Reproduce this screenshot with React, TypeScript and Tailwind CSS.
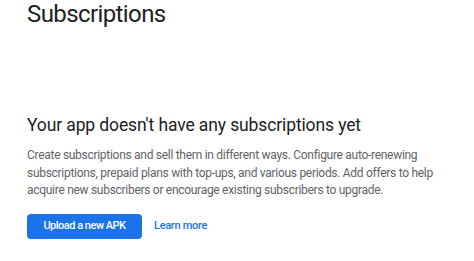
export default function App() {
  return (
    <main className="w-[474px] h-[261px] overflow-hidden bg-white px-[27px] font-['Roboto',sans-serif]">
      <h1 className="mt-[-2px] text-[24px] leading-[32px] tracking-[-0.6px] text-[#202124]">Subscriptions</h1>

      <div className="mt-[83px]">
        <h2 className="text-[17.5px] leading-[24px] tracking-[-0.12px] text-[#202124]">
          Your app doesn&apos;t have any subscriptions yet
        </h2>
        <p className="mt-[10px] whitespace-nowrap text-[12px] leading-[17.5px] tracking-[-0.29px] text-[#5f6368]">
          Create subscriptions and sell them in different ways. Configure auto-renewing
          <br />
          subscriptions, prepaid plans with top-ups, and various periods. Add offers to help
          <br />
          acquire new subscribers or encourage existing subscribers to upgrade.
        </p>
        <div className="mt-[14px] flex items-center gap-[12px]">
          <button className="h-[25px] w-[115px] rounded-[4px] bg-[#1a73e8] text-[11px] font-medium tracking-[-0.5px] text-white">
            Upload a new APK
          </button>
          <a className="text-[11px] font-medium tracking-[-0.3px] text-[#1a73e8]">Learn more</a>
        </div>
      </div>
    </main>
  )
}
